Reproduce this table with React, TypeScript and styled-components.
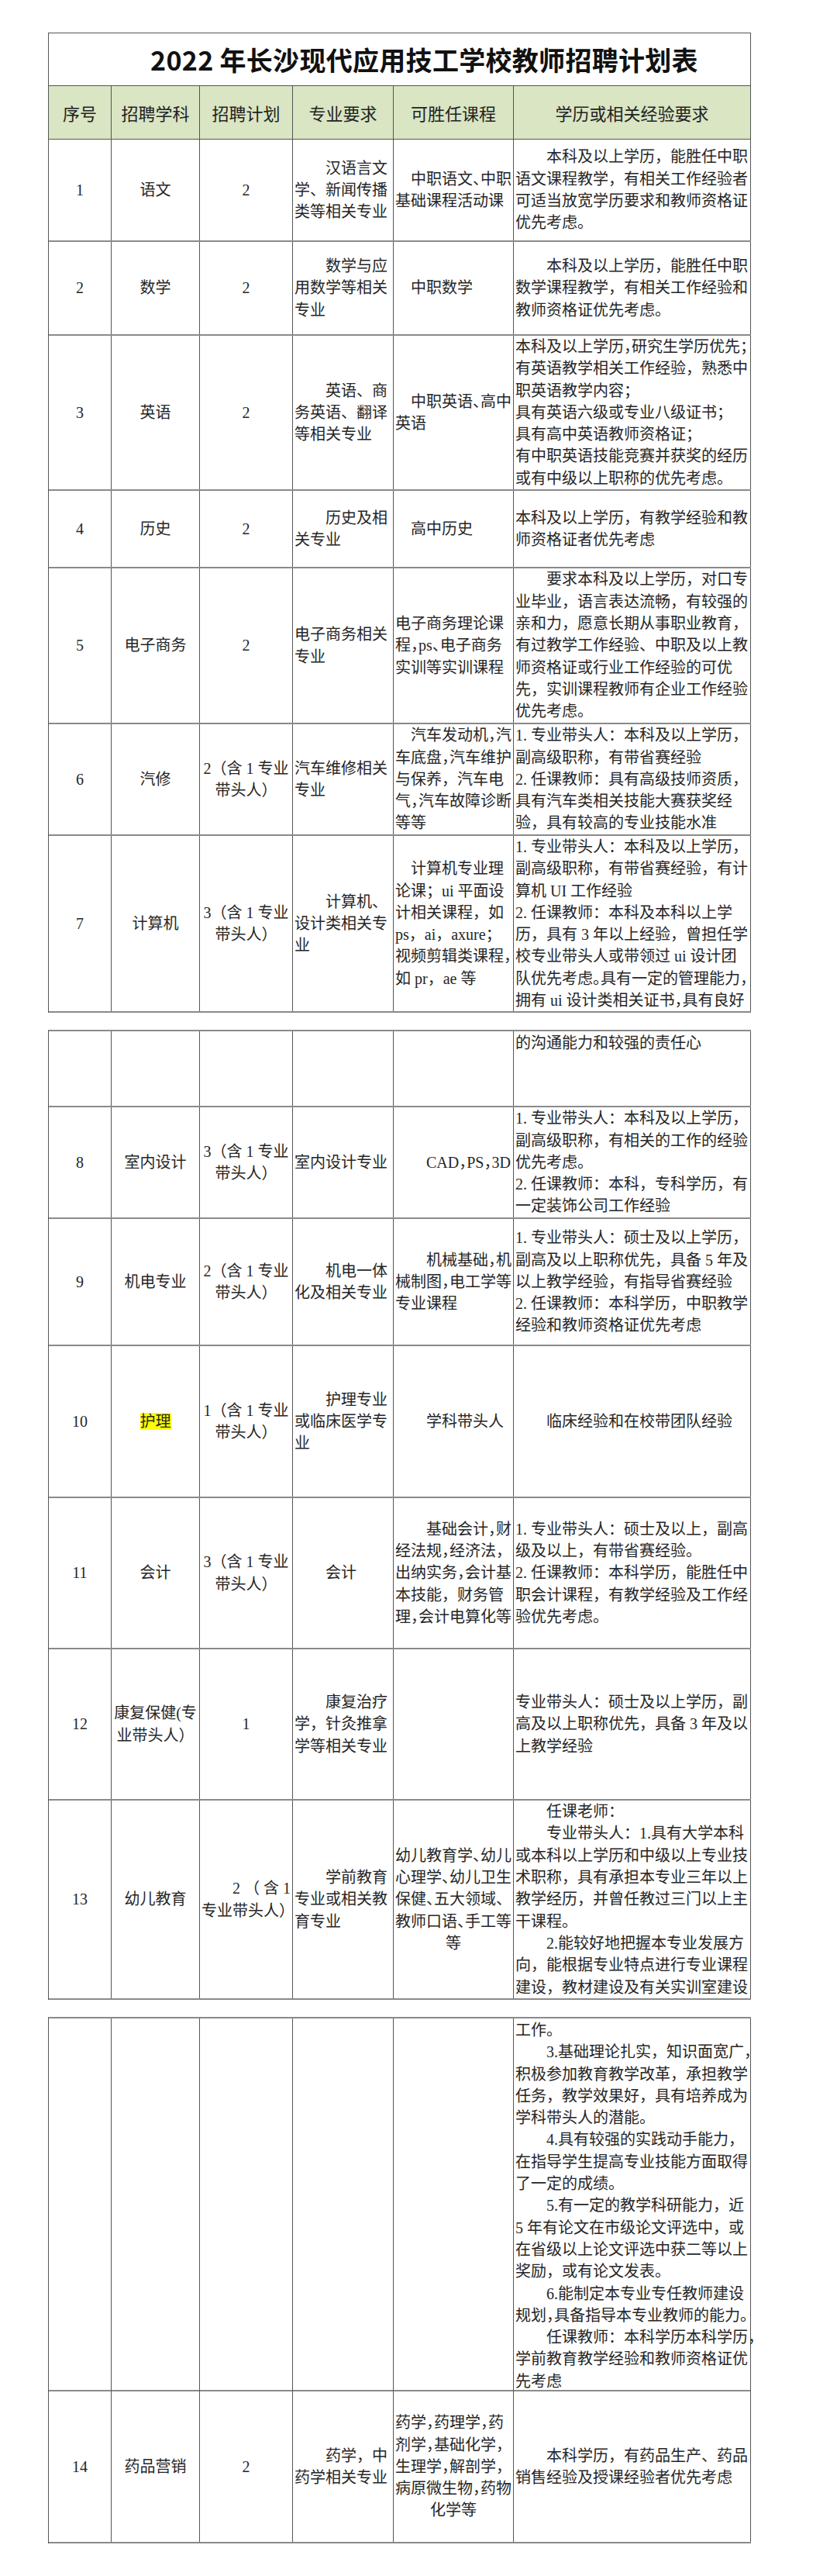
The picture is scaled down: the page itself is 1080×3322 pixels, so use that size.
import React from 'react';
import styled, { createGlobalStyle } from 'styled-components';

const GlobalStyle = createGlobalStyle`
  html, body {
    margin: 0;
    padding: 0;
    background: #fff;
  }
  body {
    font-family: "Liberation Serif", "Noto Sans CJK SC", serif;
    color: #262626;
  }
`;

const COLS = '81px 114px 120px 130px 155px 306px';
const LINE = '#555';
const ROW_LINE = '#8a8a8a';

const Sheet = styled.div`
  display: flex;
  flex-direction: column;
  gap: 22px;
  width: 907px;
  padding: 42px 0 40px 62px;
`;

const Page = styled.section<{ $first?: boolean }>`
  width: 907px;
  box-sizing: border-box;
  border-left: 1px solid ${LINE};
  border-top: ${(p) => (p.$first ? `1px solid ${LINE}` : `2px solid ${ROW_LINE}`)};
`;

const TitleRow = styled.div`
  height: 68px;
  box-sizing: border-box;
  border-right: 1px solid ${LINE};
  border-bottom: 1px solid ${LINE};
  display: flex;
  align-items: center;
  justify-content: center;
  padding-left: 64px;
  font-family: "Noto Sans CJK SC", sans-serif;
  font-weight: 700;
  font-size: 34px;
  color: #111;
  letter-spacing: 0.3px;
`;

const HeadRow = styled.div`
  display: grid;
  grid-template-columns: ${COLS};
  height: 69px;
  box-sizing: border-box;
  background: #d9e5c3;
  border-bottom: 1px solid ${LINE};
`;

const HeadCell = styled.div`
  border-right: 1px solid ${LINE};
  display: flex;
  align-items: center;
  justify-content: center;
  font-size: 22px;
  color: #222;
  white-space: nowrap;
`;

const Row = styled.div<{ $h: number }>`
  display: grid;
  grid-template-columns: ${COLS};
  height: ${(p) => p.$h}px;
  box-sizing: border-box;
  border-bottom: 2px solid ${ROW_LINE};
`;

const Cell = styled.div<{ $align: string; $top?: boolean }>`
  border-right: 1px solid ${LINE};
  display: flex;
  flex-direction: column;
  justify-content: ${(p) => (p.$top ? 'flex-start' : 'center')};
  padding: ${(p) => (p.$top ? '1px 2px 0' : '0 2px')};
  text-align: ${(p) => p.$align};
  font-size: 20px;
  line-height: 28.3px;
  min-width: 0;
`;

const Line = styled.span<{ $tight?: boolean; $align?: string }>`
  display: block;
  white-space: pre;
  font-feature-settings: ${(p) => (p.$tight ? '"halt"' : 'normal')};
  ${(p) => (p.$align ? `text-align: ${p.$align};` : '')}
`;

const Mark = styled.span`
  background: #ffff00;
`;

type Ln =
  | string
  | { t: React.ReactNode; tight?: boolean; align?: 'left' | 'center' | 'right' };

type RowData = { h: number; top?: boolean; cells: Ln[][] };

const tt = (t: string): Ln => ({ t, tight: true });
const ctr = (t: string): Ln => ({ t, align: 'center' });

const ALIGN = ['center', 'center', 'center', 'left', 'left', 'left'];
const HEAD = ['序号', '招聘学科', '招聘计划', '专业要求', '可胜任课程', '学历或相关经验要求'];
const LEAD = ['带头人）'];

const page1: RowData[] = [
  {
    h: 132,
    cells: [
      ['1'],
      ['语文'],
      ['2'],
      ['　　汉语言文', '学、新闻传播', '类等相关专业'],
      [tt('　中职语文、中职'), '基础课程活动课'],
      [
        '　　本科及以上学历，能胜任中职',
        '语文课程教学，有相关工作经验者',
        '可适当放宽学历要求和教师资格证',
        '优先考虑。',
      ],
    ],
  },
  {
    h: 121,
    cells: [
      ['2'],
      ['数学'],
      ['2'],
      ['　　数学与应', '用数学等相关', '专业'],
      ['　中职数学'],
      ['　　本科及以上学历，能胜任中职', '数学课程教学，有相关工作经验和', '教师资格证优先考虑。'],
    ],
  },
  {
    h: 200,
    cells: [
      ['3'],
      ['英语'],
      ['2'],
      ['　　英语、商', '务英语、翻译', '等相关专业'],
      [tt('　中职英语、高中'), '英语'],
      [
        tt('本科及以上学历，研究生学历优先；'),
        '有英语教学相关工作经验，熟悉中',
        '职英语教学内容；',
        '具有英语六级或专业八级证书；',
        '具有高中英语教师资格证；',
        '有中职英语技能竞赛并获奖的经历',
        '或有中级以上职称的优先考虑。',
      ],
    ],
  },
  {
    h: 100,
    cells: [
      ['4'],
      ['历史'],
      ['2'],
      ['　　历史及相', '关专业'],
      ['　高中历史'],
      ['本科及以上学历，有教学经验和教', '师资格证者优先考虑'],
    ],
  },
  {
    h: 201,
    cells: [
      ['5'],
      ['电子商务'],
      ['2'],
      ['电子商务相关', '专业'],
      ['电子商务理论课', tt('程，ps、电子商务'), '实训等实训课程'],
      [
        '　　要求本科及以上学历，对口专',
        '业毕业，语言表达流畅，有较强的',
        '亲和力，愿意长期从事职业教育，',
        '有过教学工作经验、中职及以上教',
        '师资格证或行业工作经验的可优',
        '先，实训课程教师有企业工作经验',
        '优先考虑。',
      ],
    ],
  },
  {
    h: 144,
    cells: [
      ['6'],
      ['汽修'],
      ['2（含 1 专业', ...LEAD],
      ['汽车维修相关', '专业'],
      [tt('　汽车发动机，汽'), tt('车底盘，汽车维护'), '与保养，汽车电', tt('气，汽车故障诊断'), '等等'],
      [
        '1. 专业带头人：本科及以上学历，',
        '副高级职称，有带省赛经验',
        '2. 任课教师：具有高级技师资质，',
        '具有汽车类相关技能大赛获奖经',
        '验，具有较高的专业技能水准',
      ],
    ],
  },
  {
    h: 228,
    cells: [
      ['7'],
      ['计算机'],
      ['3（含 1 专业', ...LEAD],
      ['　　计算机、', '设计类相关专', '业'],
      [
        '　计算机专业理',
        '论课；ui 平面设',
        '计相关课程，如',
        'ps，ai，axure；',
        tt('视频剪辑类课程，'),
        '如 pr，ae 等',
      ],
      [
        '1. 专业带头人：本科及以上学历，',
        '副高级职称，有带省赛经验，有计',
        '算机 UI 工作经验',
        '2. 任课教师：本科及本科以上学',
        '历，具有 3 年以上经验，曾担任学',
        '校专业带头人或带领过 ui 设计团',
        tt('队优先考虑。具有一定的管理能力，'),
        tt('拥有 ui 设计类相关证书，具有良好'),
      ],
    ],
  },
];

const page2: RowData[] = [
  { h: 98, top: true, cells: [[], [], [], [], [], ['的沟通能力和较强的责任心']] },
  {
    h: 144,
    cells: [
      ['8'],
      ['室内设计'],
      ['3（含 1 专业', ...LEAD],
      ['室内设计专业'],
      [tt('　　CAD，PS，3D')],
      [
        '1. 专业带头人：本科及以上学历，',
        '副高级职称，有相关的工作的经验',
        '优先考虑。',
        '2. 任课教师：本科，专科学历，有',
        '一定装饰公司工作经验',
      ],
    ],
  },
  {
    h: 164,
    cells: [
      ['9'],
      ['机电专业'],
      ['2（含 1 专业', ...LEAD],
      ['　　机电一体', '化及相关专业'],
      [tt('　　机械基础，机'), tt('械制图，电工学等'), '专业课程'],
      [
        '1. 专业带头人：硕士及以上学历，',
        '副高及以上职称优先，具备 5 年及',
        '以上教学经验，有指导省赛经验',
        '2. 任课教师：本科学历，中职教学',
        '经验和教师资格证优先考虑',
      ],
    ],
  },
  {
    h: 196,
    cells: [
      ['10'],
      [{ t: <Mark>护理</Mark> }],
      ['1（含 1 专业', ...LEAD],
      ['　　护理专业', '或临床医学专', '业'],
      ['　　学科带头人'],
      ['　　临床经验和在校带团队经验'],
    ],
  },
  {
    h: 195,
    cells: [
      ['11'],
      ['会计'],
      ['3（含 1 专业', ...LEAD],
      ['　　会计'],
      [
        tt('　　基础会计，财'),
        tt('经法规，经济法，'),
        tt('出纳实务，会计基'),
        '本技能，财务管',
        tt('理，会计电算化等'),
      ],
      [
        '1. 专业带头人：硕士及以上，副高',
        '级及以上，有带省赛经验。',
        '2. 任课教师：本科学历，能胜任中',
        '职会计课程，有教学经验及工作经',
        '验优先考虑。',
      ],
    ],
  },
  {
    h: 195,
    cells: [
      ['12'],
      ['康复保健(专', '业带头人）'],
      ['1'],
      ['　　康复治疗', '学，针灸推拿', '学等相关专业'],
      [],
      ['专业带头人：硕士及以上学历，副', '高及以上职称优先，具备 3 年及以', '上教学经验'],
    ],
  },
  {
    h: 257,
    cells: [
      ['13'],
      ['幼儿教育'],
      [{ t: '2 （ 含 1', align: 'right' }, '专业带头人）'],
      ['　　学前教育', '专业或相关教', '育专业'],
      [
        tt('幼儿教育学、幼儿'),
        tt('心理学、幼儿卫生'),
        tt('保健、五大领域、'),
        tt('教师口语、手工等'),
        ctr('等'),
      ],
      [
        '　　任课老师：',
        '　　专业带头人：1.具有大学本科',
        '或本科以上学历和中级以上专业技',
        '术职称，具有承担本专业三年以上',
        '教学经历，并曾任教过三门以上主',
        '干课程。',
        '　　2.能较好地把握本专业发展方',
        '向，能根据专业特点进行专业课程',
        '建设，教材建设及有关实训室建设',
      ],
    ],
  },
];

const page3: RowData[] = [
  {
    h: 481,
    top: true,
    cells: [
      [],
      [],
      [],
      [],
      [],
      [
        '工作。',
        '　　3.基础理论扎实，知识面宽广，',
        '积极参加教育教学改革，承担教学',
        '任务，教学效果好，具有培养成为',
        '学科带头人的潜能。',
        '　　4.具有较强的实践动手能力，',
        '在指导学生提高专业技能方面取得',
        '了一定的成绩。',
        '　　5.有一定的教学科研能力，近',
        '5 年有论文在市级论文评选中，或',
        '在省级以上论文评选中获二等以上',
        '奖励，或有论文发表。',
        '　　6.能制定本专业专任教师建设',
        tt('规划，具备指导本专业教师的能力。'),
        '　　任课教师：本科学历本科学历，',
        '学前教育教学经验和教师资格证优',
        '先考虑',
      ],
    ],
  },
  {
    h: 196,
    cells: [
      ['14'],
      ['药品营销'],
      ['2'],
      ['　　药学，中', '药学相关专业'],
      [
        tt('药学，药理学，药'),
        tt('剂学，基础化学，'),
        tt('生理学，解剖学，'),
        tt('病原微生物，药物'),
        ctr('化学等'),
      ],
      ['　　本科学历，有药品生产、药品', '销售经验及授课经验者优先考虑'],
    ],
  },
];

const renderLine = (l: Ln, i: number) =>
  typeof l === 'string' ? (
    <Line key={i}>{l}</Line>
  ) : (
    <Line key={i} $tight={l.tight} $align={l.align}>
      {l.t}
    </Line>
  );

const DataRows = ({ rows }: { rows: RowData[] }) => (
  <>
    {rows.map((row, r) => (
      <Row key={r} $h={row.h}>
        {row.cells.map((lines, c) => (
          <Cell key={c} $align={ALIGN[c]} $top={row.top}>
            {lines.map(renderLine)}
          </Cell>
        ))}
      </Row>
    ))}
  </>
);

export default function App() {
  return (
    <>
      <GlobalStyle />
      <Sheet>
        <Page $first>
          <TitleRow>2022 年长沙现代应用技工学校教师招聘计划表</TitleRow>
          <HeadRow>
            {HEAD.map((h) => (
              <HeadCell key={h}>{h}</HeadCell>
            ))}
          </HeadRow>
          <DataRows rows={page1} />
        </Page>
        <Page>
          <DataRows rows={page2} />
        </Page>
        <Page>
          <DataRows rows={page3} />
        </Page>
      </Sheet>
    </>
  );
}
